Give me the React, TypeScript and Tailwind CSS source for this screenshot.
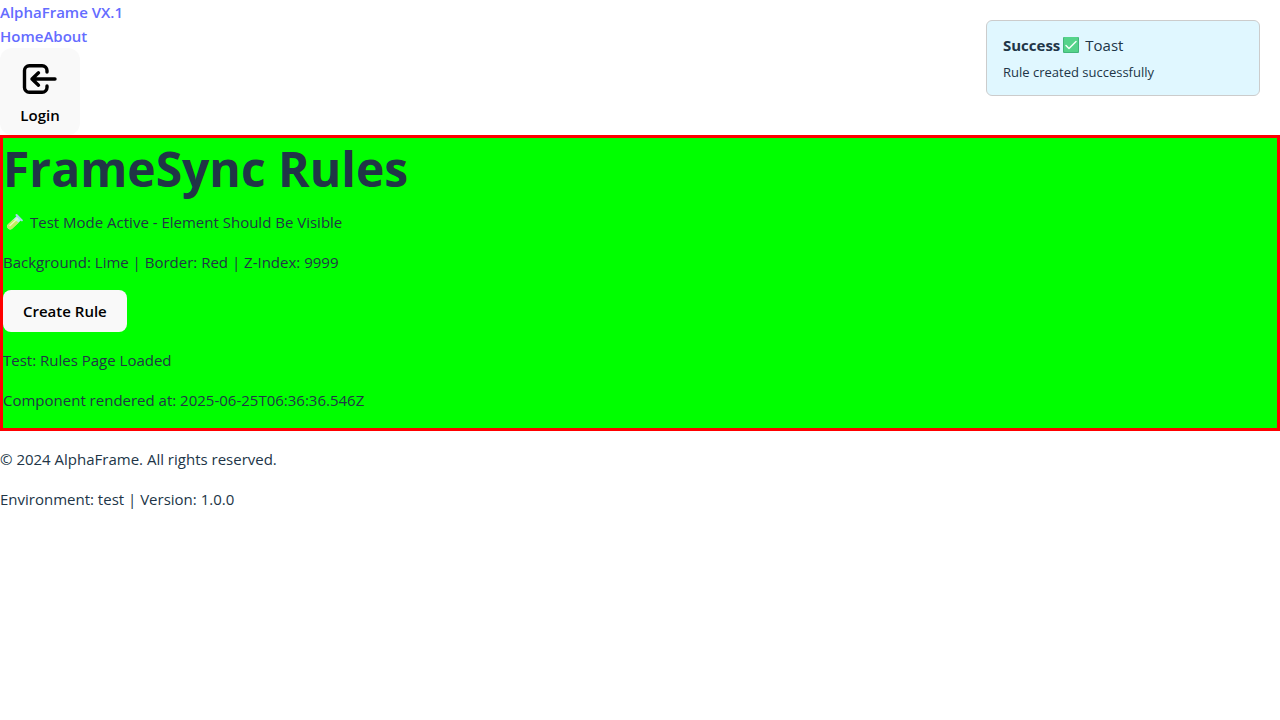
import React from "react";

function LoginIcon() {
  return (
    <svg width="40" height="32" viewBox="0 0 40 32" fill="none" stroke="currentColor" strokeWidth="3.4" strokeLinecap="round" strokeLinejoin="round" aria-hidden="true">
      <path d="M27 9V7.500a4.800 4.800 0 0 0-4.800-4.800H9.300A4.800 4.800 0 0 0 4.500 7.500v17a4.800 4.800 0 0 0 4.800 4.800h12.900a4.800 4.800 0 0 0 4.800-4.800V23" />
      <path d="M35 16H12M18.500 9.800L12 16l6.500 6.200" />
    </svg>
  );
}

function TestTubeIcon() {
  return (
    <svg width="18" height="18" viewBox="0 0 18 18" aria-hidden="true">
      <path d="M10.800 3l4.200 4.200-8.600 8.300a3 3 0 0 1-4.400-4.300z" fill="#b9ecf2" />
      <path d="M7.600 6.300l5.200 3.200-6.400 6a3 3 0 0 1-4.400-4.300z" fill="#c3ea62" />
      <path d="M4 12.600l7.500-7" stroke="#ecfbc0" strokeWidth="1.3" strokeLinecap="round" />
      <path d="M10.500 2l5.400 5.400" stroke="#a9d5ee" strokeWidth="2" strokeLinecap="round" />
    </svg>
  );
}

function CheckIcon() {
  return (
    <svg width="16" height="16" viewBox="0 0 16 16" fill="none" aria-hidden="true">
      <rect width="16" height="16" rx="1" fill="#43b67a" />
      <rect x="1" width="14" height="15" rx="1" fill="#55d38a" />
      <path d="M3 8.500l3 3 7-7" stroke="#f4fff8" strokeWidth="1.500" strokeLinecap="round" strokeLinejoin="round" />
    </svg>
  );
}

export default function App() {
  return (
    <div className="font-['Open_Sans','Noto_Sans',sans-serif] text-[15px] leading-6 text-[#213547]">
      <header>
        <div className="font-semibold text-[#646cff]">
          <a href="#top" className="block">AlphaFrame VX.1</a>
          <nav className="flex">
            <a href="#home">Home</a>
            <a href="#about">About</a>
          </nav>
        </div>
        <button type="button" className="flex flex-col items-center gap-2 rounded-xl bg-[#f9f9f9] px-5 pt-[15px] pb-2 font-semibold text-black">
          <LoginIcon />
          Login
        </button>
      </header>

      <main className="border-[3px] border-[#ff0000] bg-[#00ff00]">
        <h1 className="pt-[3px] text-5xl leading-[56px] font-bold">FrameSync Rules</h1>
        <div className="flex flex-col items-start gap-4 pt-[13px] pb-4">
          <p className="flex items-center gap-[6px] pl-[3px]">
            <TestTubeIcon />
            Test Mode Active - Element Should Be Visible
          </p>
          <p>Background: Lime | Border: Red | Z-Index: 9999</p>
          <button type="button" className="rounded-lg bg-[#f9f9f9] px-5 py-[9px] font-semibold text-black">Create Rule</button>
          <p>Test: Rules Page Loaded</p>
          <p>Component rendered at: 2025-06-25T06:36:36.546Z</p>
        </div>
      </main>

      <footer className="flex flex-col gap-4 py-4">
        <p>© 2024 AlphaFrame. All rights reserved.</p>
        <p>Environment: test | Version: 1.0.0</p>
      </footer>

      <div role="status" className="fixed top-5 right-5 w-[274px] rounded-md border border-[#cccccc] bg-[#e0f7ff] px-4 py-3">
        <div className="flex items-center">
          <strong className="pr-[3px] font-bold">Success</strong>
          <CheckIcon />
          <span className="pl-[6px]">Toast</span>
        </div>
        <p className="pt-1 text-[13px] leading-[22px]">Rule created successfully</p>
      </div>
    </div>
  );
}
